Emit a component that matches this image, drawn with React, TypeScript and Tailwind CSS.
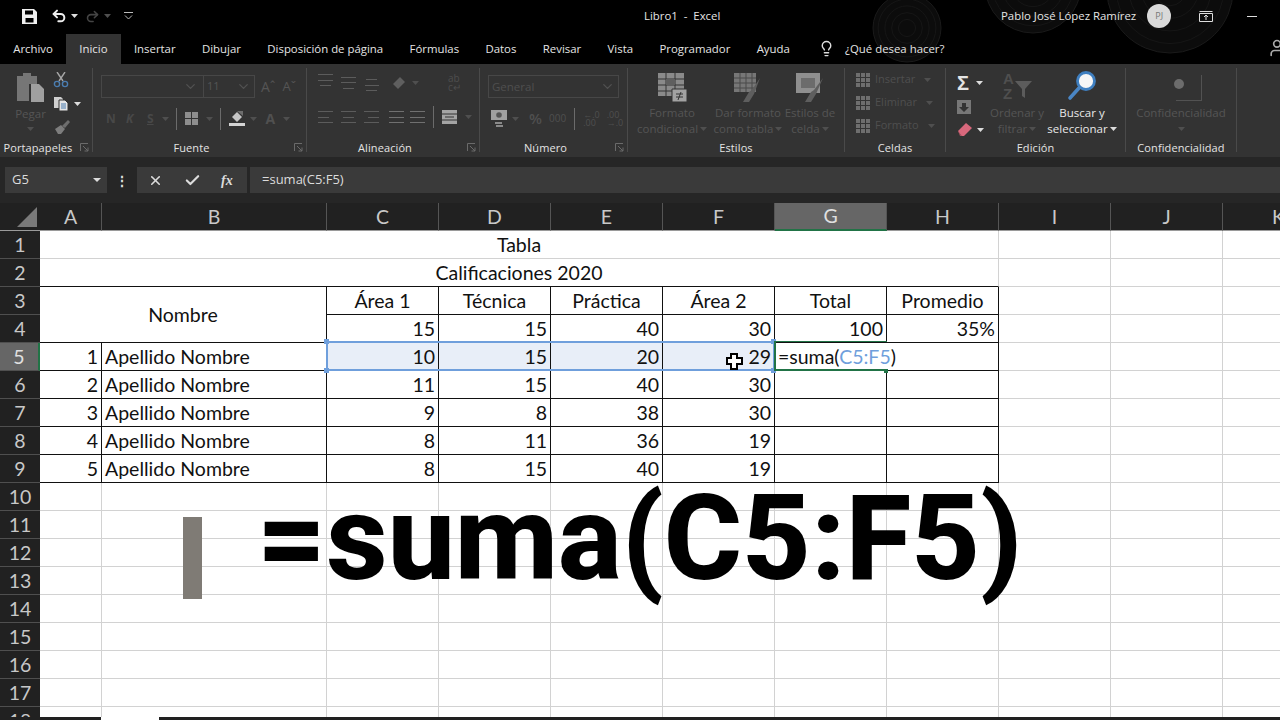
import type { ReactNode } from "react";
import { Check, ChevronDown, Lightbulb, Redo2, Undo2, User, X } from "lucide-react";

const ui = "font-['Open_Sans',sans-serif]";
const columns = ["A", "B", "C", "D", "E", "F", "G", "H", "I", "J", "K"];
const tabs = ["Archivo", "Inicio", "Insertar", "Dibujar", "Disposición de página", "Fórmulas", "Datos", "Revisar", "Vista", "Programador", "Ayuda"];
const students = [
  [1, 10, 15, 20, 29],
  [2, 11, 15, 40, 30],
  [3, 9, 8, 38, 30],
  [4, 8, 11, 36, 19],
  [5, 8, 15, 40, 19],
];

function Caret({ className = "", light = false }: { className?: string; light?: boolean }) {
  return (
    <svg width="7" height="4" viewBox="0 0 7 4" className={`shrink-0 ${className}`}>
      <path d="M0 0h7L3.5 4z" fill={light ? "#dddddd" : "#4f4f4f"} />
    </svg>
  );
}

function Launcher() {
  return (
    <svg width="9" height="9" viewBox="0 0 9 9" fill="none" className="absolute right-[3px] bottom-[0px]" stroke="#6a6a6a">
      <path d="M.5 8V.5H8M3 3l5 5M8 4.5V8H4.5" />
    </svg>
  );
}

function Group({ label, width, launcher, children }: { label: string; width: string; launcher?: boolean; children?: ReactNode }) {
  return (
    <div className={`relative flex h-[84px] shrink-0 flex-col border-r border-[#4a4a4a] ${width}`}>
      <div className="min-h-0 flex-1">{children}</div>
      <div className={`-mb-[6px] flex h-[19px] items-center justify-center text-[11px] tracking-[0.1px] text-[#e4e4e4] ${launcher ? "pr-4" : ""}`}>{label}</div>
      {launcher && <Launcher />}
    </div>
  );
}

function Faded({ children, className = "" }: { children: ReactNode; className?: string }) {
  return <div className={`text-[11.5px] leading-4 whitespace-nowrap text-[#555555] ${className}`}>{children}</div>;
}

function Lines({ rows = [12, 12, 12], align = "items-start", color = "#5c5c5c" }: { rows?: number[]; align?: string; color?: string }) {
  return (
    <div className={`flex h-3 w-[15px] flex-col justify-between ${align}`}>
      {rows.map((w, i) => (
        <i key={i} className="block h-px" style={{ width: w, backgroundColor: color }} />
      ))}
    </div>
  );
}

function VSep() {
  return <div className="h-[22px] w-px bg-[#6b6b6b]" />;
}

function Clipboard() {
  return (
    <svg width="29" height="31" viewBox="0 0 29 31">
      <path d="M1 4h6V1h8v3h6v8h-8v17H1z" fill="#767676" />
      <path d="M15 12h8l5 5v13H15z" fill="#a0a0a0" />
    </svg>
  );
}

function Ribbon() {
  return (
    <div className={`flex h-[93px] bg-[#333333] pt-1 ${ui}`}>
      <Group label="Portapapeles" width="w-[93px]" launcher>
        <div className="flex pl-[15px] pt-1">
          <div className="flex w-[31px] flex-col items-center">
            <Clipboard />
            <Faded className="mt-[3px]">Pegar</Faded>
            <Caret className="mt-[5px]" />
          </div>
          <div className="ml-[7px] flex flex-col gap-[8px]">
            <svg width="16" height="16" viewBox="0 0 16 16" fill="none" strokeWidth="1.4">
              <path d="M6 9 12 0M10 9 4 0" stroke="#a6a6a6" />
              <circle cx="4" cy="12" r="2.6" stroke="#4b7db0" />
              <circle cx="12" cy="12" r="2.6" stroke="#4b7db0" />
            </svg>
            <div className="flex items-center gap-[5px]">
              <svg width="16" height="15" viewBox="0 0 16 15">
                <path d="M1 1h7l2 2v9H1z" fill="#d0d0d0" />
                <path d="M6 4h6l3 3v8H6z" fill="#e6e6e6" stroke="#333333" />
                <path d="M8 8h5M8 10h5M8 12h5" stroke="#4b7db0" />
              </svg>
              <Caret light />
            </div>
            <svg width="18" height="15" viewBox="0 0 18 15">
              <path d="M9 7 15 1l2 2-5 6z" fill="#6e6e6e" />
              <path d="M2 10 8 6l4 4-4 5H5z" fill="#7d7d7d" />
            </svg>
          </div>
        </div>
      </Group>

      <Group label="Fuente" width="w-[214px]" launcher>
        <div className="pl-2 pt-[7px]">
          <div className="flex items-center">
            <div className="flex h-[23px] w-[154px] border border-[#474747]">
              <div className="flex w-[102px] items-center justify-end border-r border-[#474747] pr-[5px]"><ChevronDown size={15} color="#525252" /></div>
              <div className="flex flex-1 items-center justify-between px-[3px] text-[11px] text-[#555555]">11<ChevronDown size={15} color="#525252" /></div>
            </div>
            <span className="ml-[6px] text-[14px] text-[#555555]">Aˆ</span>
            <span className="ml-[7px] text-[13px] text-[#555555]">Aˇ</span>
          </div>
          <div className="mt-[9px] flex h-[23px] items-center pl-[5px] text-[12px] text-[#484848]">
            <span className="w-5 font-bold">N</span>
            <span className="w-[21px] font-bold italic">K</span>
            <span className="font-bold underline">S</span>
            <Caret className="ml-[8px] mr-[7px]" />
            <VSep />
            <div className="mx-[8px] grid h-[13px] w-[13px] grid-cols-2 gap-px">
              <i className="bg-[#8e8e8e]" /><i className="bg-[#8e8e8e]" /><i className="bg-[#8e8e8e]" /><i className="bg-[#8e8e8e]" />
            </div>
            <Caret className="mr-[7px]" />
            <VSep />
            <svg width="18" height="17" viewBox="0 0 18 17" className="ml-[7px]">
              <path d="M4 7 9 2l5 5-5 5z" fill="#c4c4c4" />
              <path d="M9 1h6v5z" fill="#6e6e6e" />
              <path d="M1 13h16v3H1z" fill="#d4d4d4" />
            </svg>
            <Caret className="ml-[4px]" />
            <span className="ml-[9px] text-[14px] font-bold text-[#505050]">A</span>
            <Caret className="ml-[8px]" />
          </div>
        </div>
      </Group>

      <Group label="Alineación" width="w-[173px]" launcher>
        <div className="pl-[11px] pt-[8px]">
          <div className="flex h-[13px] items-center gap-2">
            <div className="-mt-[5px]"><Lines rows={[15, 15, 11]} align="items-center" /></div>
            <div><Lines rows={[15, 15, 11]} align="items-center" /></div>
            <div className="mt-[5px]"><Lines rows={[11, 14, 11]} align="items-center" /></div>
            <svg width="17" height="14" viewBox="0 0 17 14" className="ml-1"><path d="M2 8 9 1l5 5-7 7z" fill="#5f5f5f" /></svg>
            <Caret className="-ml-1" />
            <div className="ml-[21px] text-[10px] leading-[9px] text-[#4e4e4e]">ab<br />c↵</div>
          </div>
          <div className="mt-[21px] flex h-[14px] items-center gap-2">
            <Lines rows={[15, 11, 15]} />
            <Lines rows={[15, 11, 15]} align="items-center" />
            <Lines rows={[15, 11, 15]} align="items-end" />
            <div className="ml-[2px]"><Lines rows={[15, 15, 15]} align="items-end" color="#707070" /></div>
            <div className="-ml-[2px]"><Lines rows={[15, 15, 15]} align="items-end" color="#707070" /></div>
            <VSep />
            <svg width="15" height="14" viewBox="0 0 15 14"><path d="M0 0h15v14H0z" fill="#a4a4a4" /><path d="M0 4h15M0 10h15" stroke="#333333" /><path d="M3 7h9" stroke="#333333" /></svg>
            <Caret />
          </div>
        </div>
      </Group>

      <Group label="Número" width="w-[148px]" launcher>
        <div className="pl-[8px] pt-[7px]">
          <div className="flex h-[23px] w-[131px] items-center justify-between border border-[#474747] px-[3px] text-[11.5px] text-[#4f4f4f]">
            General<ChevronDown size={15} color="#525252" />
          </div>
          <div className="mt-[9px] flex h-[23px] items-center pl-[3px] text-[#4f4f4f]">
            <svg width="16" height="17" viewBox="0 0 16 17">
              <path d="M0 0h16v10H0z" fill="#a0a0a0" />
              <circle cx="8" cy="5" r="2.8" fill="#555555" />
              <path d="M4 12h7v2H4zM5 15h7v2H5z" fill="#8a8a8a" />
            </svg>
            <Caret className="ml-[5px]" />
            <span className="ml-[10px] text-[15px] font-semibold">%</span>
            <span className="ml-[7px] text-[10px]">000</span>
            <div className="mx-[8px]"><VSep /></div>
            <span className="text-[9px] leading-[8px]">←.0<br />.00</span>
            <span className="ml-[7px] text-[9px] leading-[8px]">.00<br />→.0</span>
          </div>
        </div>
      </Group>

      <Group label="Estilos" width="w-[217px]">
        <div className="flex pl-[4px] pt-1 text-center">
          <div className="flex w-[80px] flex-col items-center">
            <svg width="30" height="30" viewBox="0 0 30 30">
              <path d="M1 1h26v23H1z" fill="#8a8a8a" />
              <path d="M1 7h26M1 13h26M1 19h26M9 1v23M18 1v23" stroke="#333333" />
              <path d="M9 7h9v6H9z" fill="#5f5f5f" />
              <path d="M15 17h15v13H15z" fill="#a2a2a2" stroke="#333333" />
              <path d="M19 22h7M19 25h7M24 20l-3 8" stroke="#333333" />
            </svg>
            <div className="mt-[3px] flex flex-col items-center">
              <Faded>Formato</Faded>
              <Faded className="flex items-center gap-[2px]">condicional<Caret /></Faded>
            </div>
          </div>
          <div className="flex w-[72px] flex-col items-center">
            <svg width="30" height="30" viewBox="0 0 30 30">
              <path d="M1 1h22v19H1z" fill="#777777" />
              <path d="M1 6h22M1 11h22M1 16h22M7 1v19M13 1v19M19 1v19" stroke="#4a4a4a" />
              <path d="M27 6 19 18l-3 2-6 10h6l5-8z" fill="#5e5e5e" />
            </svg>
            <div className="mt-[3px] flex flex-col items-center">
              <Faded>Dar formato</Faded>
              <Faded className="flex items-center gap-[2px]">como tabla<Caret /></Faded>
            </div>
          </div>
          <div className="flex w-[52px] flex-col items-center">
            <svg width="30" height="30" viewBox="0 0 30 30">
              <path d="M1 1h24v20H1z" fill="#8f8f8f" />
              <path d="M6 6h14v10H6z" fill="#6c6c6c" />
              <path d="M28 6 19 18l-3 2-6 10h6l5-8z" fill="#5e5e5e" />
            </svg>
            <div className="mt-[3px] flex flex-col items-center">
              <Faded>Estilos de</Faded>
              <Faded className="flex items-center gap-[2px]">celda<Caret /></Faded>
            </div>
          </div>
        </div>
      </Group>

      <Group label="Celdas" width="w-[101px]">
        <div className="pl-[11px]">
          {["Insertar", "Eliminar", "Formato"].map((t) => (
            <div key={t} className="flex h-[23px] items-center text-[11px] text-[#4f4f4f]">
              <div className="grid h-[14px] w-[14px] grid-cols-3 gap-px">
                {Array.from({ length: 9 }).map((_, i) => <i key={i} className="bg-[#6e6e6e]" />)}
              </div>
              <span className="ml-[5px]">{t}</span>
              <Caret className="ml-[9px]" />
            </div>
          ))}
        </div>
      </Group>

      <Group label="Edición" width="w-[180px]">
        <div className="flex pl-[11px] pt-[3px]">
          <div className="flex flex-col">
            <div className="flex h-[23px] items-center gap-[7px]">
              <span className="font-['Liberation_Sans',sans-serif] text-[20px] leading-5 font-bold text-[#e4e4e4]">Σ</span>
              <Caret light />
            </div>
            <div className="mt-[1px] flex h-[23px] items-center">
              <svg width="14" height="14" viewBox="0 0 14 14"><path d="M0 0h14v14H0z" fill="#777777" /><path d="M5 3h4v4h3l-5 5-5-5h3z" fill="#333333" /></svg>
            </div>
            <div className="flex h-[23px] items-center gap-[5px]">
              <svg width="15" height="14" viewBox="0 0 15 14"><path d="M1 8 9 0l6 5-8 8H4z" fill="#d8687c" /><path d="M1 8l4 5H3z" fill="#a34f5e" /></svg>
              <Caret light />
            </div>
          </div>
          <div className="ml-[6px] flex w-[54px] flex-col items-center">
            <svg width="30" height="30" viewBox="0 0 30 30">
              <text x="1" y="13" fontSize="15" fontWeight="bold" fill="#4f4f4f" fontFamily="Liberation Sans">A</text>
              <text x="1" y="28" fontSize="15" fontWeight="bold" fill="#4f4f4f" fontFamily="Liberation Sans">Z</text>
              <path d="M13 10h17l-7 8v9l-3-2v-7z" fill="#5c5c5c" />
            </svg>
            <div className="mt-[4px] flex flex-col items-center">
              <Faded>Ordenar y</Faded>
              <Faded className="flex items-center gap-[2px]">filtrar<Caret /></Faded>
            </div>
          </div>
          <div className="ml-[4px] flex w-[68px] flex-col items-center text-[11.5px] leading-4 whitespace-nowrap text-[#e8e8e8]">
            <svg width="30" height="30" viewBox="0 0 30 30" fill="none">
              <circle cx="19" cy="10" r="8.5" fill="#f6f6f6" stroke="#3f7fc0" strokeWidth="2.8" />
              <path d="M12 17 3 27" stroke="#4a86c5" strokeWidth="3.6" strokeLinecap="round" />
            </svg>
            <span className="mt-[4px]">Buscar y</span>
            <span className="flex items-center gap-[2px]">seleccionar<Caret light /></span>
          </div>
        </div>
      </Group>

      <Group label="Confidencialidad" width="w-[111px]">
        <div className="flex flex-col items-center pt-[7px]">
          <div className="ml-[16px] flex h-[26px] w-[26px] items-center border-r border-b border-[#525252]">
            <div className="-ml-[2px] mb-[7px] h-[10px] w-[10px] rounded-full bg-[#6c6c6c]" />
          </div>
          <Faded className="mt-[4px]">Confidencialidad</Faded>
          <Caret className="mt-[6px]" />
        </div>
      </Group>
    </div>
  );
}

function TreeRings() {
  const blobs = [
    { cx: 907, cy: 28, r: 34 },
    { cx: 1033, cy: -15, r: 48 },
    { cx: 1170, cy: -10, r: 63 },
  ];
  return (
    <svg width="1280" height="64" viewBox="0 0 1280 64" fill="none" className="absolute inset-0">
      {blobs.map((b) => (
        <g key={b.cx}>
          <circle cx={b.cx} cy={b.cy} r={b.r} fill="#0c0c0c" stroke="#1a1a1a" />
          {[0.25, 0.45, 0.65, 0.85].map((k) => (
            <circle key={k} cx={b.cx} cy={b.cy} r={b.r * k} stroke="#161616" />
          ))}
        </g>
      ))}
    </svg>
  );
}

function Header() {
  return (
    <div className={`relative h-16 overflow-hidden bg-black text-[11.4px] text-[#e4e4e4] ${ui}`}>
      <TreeRings />
      <div className="relative flex h-[32px] items-center pl-[22px]">
        <svg width="15" height="15" viewBox="0 0 15 15" className="mt-px">
          <path d="M0 0h12l3 3v12H0z" fill="#f0f0f0" />
          <path d="M3 1.500h8v4H3zM3.500 9h8v4.500h-8z" fill="#000000" />
        </svg>
        <Undo2 size={16} strokeWidth={3} color="#eeeeee" className="ml-[14px]" />
        <Caret light className="ml-[4px]" />
        <Redo2 size={15} strokeWidth={2.5} color="#444444" className="ml-[7px]" />
        <Caret className="ml-[4px]" />
        <svg width="9" height="8" viewBox="0 0 9 8" fill="none" stroke="#bbbbbb" className="ml-[13px]"><path d="M0 .5h9M1 3.500 4.500 7 8 3.500" /></svg>
        <span className="absolute left-[644px]">Libro1 &nbsp;-&nbsp; Excel</span>
        <div className="absolute left-[1001px] flex items-center">
          <span>Pablo José López Ramírez</span>
          <div className="ml-[11px] flex h-6 w-6 items-center justify-center rounded-full bg-[#d9d9d9] text-[9px] text-[#777777]">PJ</div>
          <svg width="14" height="11" viewBox="0 0 14 11" fill="none" stroke="#dddddd" className="ml-[28px]"><path d="M.5 2.500h13v8H.5zM.5.500h13M7 9V4.500M5 6l2-2 2 2" /></svg>
          <div className="ml-[34px] h-px w-[10px] bg-[#dddddd]" />
        </div>
      </div>
      <div className="relative flex h-[32px] items-center">
        {tabs.map((tab) => (
          <div key={tab} className={`flex h-[30px] items-center self-end px-[13.2px] ${tab === "Inicio" ? "bg-[#333333]" : ""}`}>
            <span>{tab}</span>
          </div>
        ))}
        <Lightbulb size={17} color="#dddddd" className="mt-[1px] ml-[15px]" />
        <span className="mt-[1px] ml-[10px]">¿Qué desea hacer?</span>
        <User size={20} color="#aaaaaa" className="absolute left-[1267px]" />
      </div>
    </div>
  );
}

function FormulaBar() {
  return (
    <div className={`flex h-[46px] items-start bg-[#262626] pt-[10px] text-[13px] text-[#dcdcdc] ${ui}`}>
      <div className="ml-[5px] flex h-[26px] w-[102px] items-center justify-between bg-[#3a3a3a] pl-[7px] pr-[6px]">
        G5<svg width="8" height="4" viewBox="0 0 8 4"><path d="M0 0h8L4 4z" fill="#dddddd" /></svg>
      </div>
      <div className="flex h-[26px] w-[30px] items-center justify-center text-[14px] font-bold">⋮</div>
      <div className="flex h-[26px] w-[110px] items-center bg-[#3a3a3a] pl-[11px]">
        <X size={15} strokeWidth={2.5} />
        <Check size={17} strokeWidth={3} className="ml-[21px]" />
        <span className="ml-[20px] font-['Liberation_Serif',serif] text-[14px] font-bold italic">fx</span>
      </div>
      <div className="ml-[3px] flex h-[26px] flex-1 items-center bg-[#3a3a3a] pl-3">=suma(C5:F5)</div>
    </div>
  );
}

function Cell({ children, className = "" }: { children?: ReactNode; className?: string }) {
  return <div className={`flex items-center border-r border-b border-[#d2d2d2] px-[3px] pt-px whitespace-nowrap ${className}`}>{children}</div>;
}

const black = "border-r-[#111111] border-b-[#111111]";

function RowCells({ n }: { n: number }) {
  const selected = n === 5;
  const head = (
    <div className={`flex items-center justify-center border-b border-[#4f4f4f] pt-px ${selected ? "border-r-2 border-r-[#217346] bg-[#666666] text-[#e0e0e0]" : "bg-[#212121] text-[#c8c8c8]"}`}>{n}</div>
  );
  const blank = ["I", "J", "K"].map((c) => <Cell key={c} />);

  if (n === 1 || n === 2) {
    return (
      <>
        {head}
        <Cell className={`col-span-8 justify-center ${n === 2 ? "border-b-[#111111]" : ""}`}>{n === 1 ? "Tabla" : "Calificaciones 2020"}</Cell>
        {blank}
      </>
    );
  }
  if (n === 3) {
    return (
      <>
        {head}
        <Cell className={`col-span-2 row-span-2 justify-center ${black}`}>Nombre</Cell>
        {["Área 1", "Técnica", "Práctica", "Área 2", "Total", "Promedio"].map((t) => (
          <Cell key={t} className={`justify-center ${black}`}>{t}</Cell>
        ))}
        {blank}
      </>
    );
  }
  if (n === 4) {
    return (
      <>
        {head}
        {["15", "15", "40", "30", "100", "35%"].map((t, i) => (
          <Cell key={i} className={`justify-end ${black}`}>{t}</Cell>
        ))}
        {blank}
      </>
    );
  }
  if (n <= 9) {
    const [id, c, d, e, f] = students[n - 5];
    return (
      <>
        {head}
        <Cell className={`justify-end ${black}`}>{id}</Cell>
        <Cell className={black}>Apellido Nombre</Cell>
        {[c, d, e, f].map((v, i) => (
          <Cell key={i} className={`justify-end ${black} ${selected ? "bg-[#e8eef8]" : ""}`}>{v}</Cell>
        ))}
        <Cell className={selected ? "border-r-transparent border-b-[#111111]" : black}>
          {selected && <span>=suma(<span className="text-[#6f9fdc]">C5:F5</span>)</span>}
        </Cell>
        <Cell className={black} />
        {blank}
      </>
    );
  }
  return (
    <>
      {head}
      {Array.from({ length: 11 }).map((_, i) => <Cell key={i} />)}
    </>
  );
}

function Sheet() {
  const rows = Array.from({ length: 18 }, (_, i) => i + 1);
  return (
    <div className="relative h-[517px] overflow-hidden bg-white font-['Lato',sans-serif] text-[19.5px] text-[#111111]">
      <div className="grid grid-cols-[40px_62px_225px_112px_112px_112px_112px_112px_112px_112px_112px_112px] grid-rows-[28px_repeat(18,28px)]">
        <div className="flex items-end justify-end border-b border-[#9a9a9a] bg-[#212121] p-[3px]">
          <svg width="20" height="20" viewBox="0 0 20 20"><path d="M20 0v20H0z" fill="#7a7a7a" /></svg>
        </div>
        {columns.map((c) => (
          <div key={c} className={`flex items-center justify-center border-r border-[#555555] ${c === "G" ? "border-b-2 border-b-[#217346] bg-[#666666] text-[#e0e0e0]" : "border-b border-b-[#9a9a9a] bg-[#212121] text-[#c8c8c8]"}`}>{c}</div>
        ))}
        {rows.map((n) => (
          <RowCells key={n} n={n} />
        ))}
      </div>
      {/* rango de la fórmula */}
      <div className="absolute left-[326px] top-[138px] h-[30px] w-[449px] border-2 border-[#6f9fdc]" />
      {[[324, 136], [771, 136], [324, 165], [771, 165]].map(([x, y]) => (
        <div key={x + "-" + y} className="absolute h-[5px] w-[5px] bg-[#6f9fdc]" style={{ left: x, top: y }} />
      ))}
      <div className="absolute left-[774px] top-[138px] h-[30px] w-[113px] border-t border-b-2 border-l-2 border-[#217346]" />
      <div className="absolute left-[884px] top-[166px] h-1 w-1 bg-[#217346]" />
      <svg width="20" height="20" viewBox="0 0 20 20" className="absolute left-[725px] top-[149px]">
        <path d="M6 2h6v4h5v6h-5v5H6v-5H2V6h4z" fill="#ffffff" stroke="#000000" strokeWidth="2" />
      </svg>
      {/* texto grande encima */}
      <div className="absolute left-[183px] top-[314px] h-[82px] w-[19px] bg-[#7f7b75]" />
      <div className="absolute left-[257px] top-[267px] font-['Roboto',sans-serif] text-[119.5px] leading-[1.15] font-extrabold whitespace-nowrap text-black">=suma(C5:F5)</div>
      <div className="absolute inset-x-0 bottom-0 flex h-[3px]">
        <div className="w-[101px] bg-[#212121]" />
        <div className="w-[58px] bg-white" />
        <div className="flex-1 bg-[#212121]" />
      </div>
    </div>
  );
}

export default function App() {
  return (
    <div className="h-[720px] w-[1280px] overflow-hidden bg-[#262626]">
      <Header />
      <Ribbon />
      <FormulaBar />
      <Sheet />
    </div>
  );
}
